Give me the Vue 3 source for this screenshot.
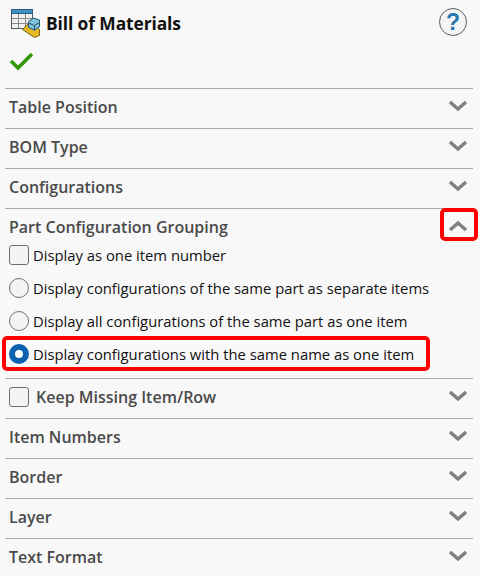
<template>
  <div class="panel">
    <header class="head">
      <div class="title-row">
        <svg class="bom-icon" width="30" height="30" viewBox="0 0 30 30">
          <rect x="0.5" y="0.500" width="21" height="19" fill="#eef0f0" stroke="#555" />
          <rect x="0.5" y="0.500" width="21" height="4" fill="#3f8fc0" stroke="#2a5f7f" />
          <path d="M7.500 5v14M14.500 5v14M1 9.500h20M1 14.500h20" stroke="#8a8a8a" fill="none" />
          <path d="M11.500 20.500l6-6 11 6v6l-5 2z" fill="#e5b820" stroke="#77631a" />
          <path d="M17.500 12.500l5-3.500 6 2v7l-5 3-6-2.500z" fill="#7fc4dc" stroke="#27566e" />
          <path d="M17.500 14l6 2.500v5M23.500 16.500l5-3" fill="none" stroke="#27566e" />
        </svg>
        <h1 class="title">Bill of Materials</h1>
        <svg class="help" width="30" height="30" viewBox="0 0 30 30">
          <circle cx="15" cy="15" r="13.500" fill="#f4f5f6" stroke="#5e5e5e" />
          <text x="15" y="23" text-anchor="middle" class="help-mark">?</text>
        </svg>
      </div>
      <svg class="check" width="26" height="20" viewBox="0 0 26 20">
        <path d="M2 10l7 7L23 3" fill="none" stroke="#2f9a06" stroke-width="3.500" />
      </svg>
    </header>

    <section v-for="s in before" :key="s" class="section">
      <div class="sec-head">
        <span class="sec-title">{{ s }}</span>
        <svg class="chev" width="20" height="12" viewBox="0 0 20 12"><path d="M2 2l8 7 8-7" fill="none" stroke="#808080" stroke-width="3.500" /></svg>
      </div>
    </section>

    <section class="section open">
      <div class="sec-head">
        <span class="sec-title">Part Configuration Grouping</span>
        <span class="chev-box">
          <svg class="chev" width="20" height="12" viewBox="0 0 20 12"><path d="M2 10l8-7 8 7" fill="none" stroke="#808080" stroke-width="3.500" /></svg>
        </span>
      </div>
      <ul class="options">
        <li v-for="o in options" :key="o.label" class="option" :class="{ picked: o.picked }">
          <span :class="o.kind"></span>
          <span>{{ o.label }}</span>
        </li>
      </ul>
    </section>

    <section class="section">
      <div class="sec-head">
        <span class="keep">
          <span class="box"></span>
          <span class="sec-title">Keep Missing Item/Row</span>
        </span>
        <svg class="chev" width="20" height="12" viewBox="0 0 20 12"><path d="M2 2l8 7 8-7" fill="none" stroke="#808080" stroke-width="3.500" /></svg>
      </div>
    </section>

    <section v-for="s in after" :key="s" class="section">
      <div class="sec-head">
        <span class="sec-title">{{ s }}</span>
        <svg class="chev" width="20" height="12" viewBox="0 0 20 12"><path d="M2 2l8 7 8-7" fill="none" stroke="#808080" stroke-width="3.500" /></svg>
      </div>
    </section>
  </div>
</template>

<script setup>
const before = ['Table Position', 'BOM Type', 'Configurations']
const after = ['Item Numbers', 'Border', 'Layer', 'Text Format']

const options = [
  { kind: 'box', label: 'Display as one item number' },
  { kind: 'radio', label: 'Display configurations of the same part as separate items' },
  { kind: 'radio', label: 'Display all configurations of the same part as one item' },
  { kind: 'radio-on', label: 'Display configurations with the same name as one item', picked: true }
]
</script>

<style>
html,
body {
  margin: 0;
  background: #f8f8f8;
}
</style>

<style scoped>
.panel {
  width: 480px;
  height: 576px;
  overflow: hidden;
  background: #f8f8f8;
  font-family: "Open Sans", "Noto Sans", sans-serif;
  color: #111;
}

.head {
  height: 88px;
  padding: 8px 7px 0 11px;
  box-sizing: border-box;
}

.title-row {
  display: flex;
  align-items: center;
  height: 30px;
}

.bom-icon {
  margin-top: 1px;
  flex: none;
}

.title {
  margin: 0 0 0 5px;
  font-size: 17.400px;
  font-weight: 700;
  letter-spacing: -0.1px;
  flex: 1;
}

.help {
  margin: -2px 5px 0 0;
}

.help-mark {
  font-family: "Liberation Sans", sans-serif;
  font-size: 23px;
  font-weight: 700;
  fill: #2a78ab;
}

.check {
  display: block;
  margin: 13px 0 0 -2px;
}

.section {
  margin: 0 7px 0 5px;
  border-top: 1px solid #a8a8a8;
}

.sec-head {
  display: flex;
  align-items: center;
  justify-content: space-between;
  height: 39px;
  box-sizing: border-box;
  padding: 0 5px 4px 4px;
}

.sec-title {
  font-size: 16px;
  font-weight: 600;
  color: #4a4a4a;
}

.chev {
  display: block;
  margin-top: -1px;
}

.chev-box {
  position: relative;
  display: flex;
}

.chev-box::after {
  content: "";
  position: absolute;
  left: -8px;
  top: -13px;
  width: 30px;
  height: 25px;
  border: 4px solid #f00;
  border-radius: 5px;
}

.options {
  list-style: none;
  margin: -10px 0 0;
  padding: 0 0 8px 4px;
}

.option {
  display: flex;
  align-items: center;
  gap: 4px;
  height: 33px;
  font-size: 14.800px;
  color: #111;
}

.picked {
  position: relative;
}

.picked::after {
  content: "";
  position: absolute;
  left: -7px;
  top: -1px;
  width: 420px;
  height: 27px;
  border: 4px solid #f00;
  border-radius: 5px;
}

.box {
  width: 18px;
  height: 18px;
  border: 1px solid #707070;
  border-radius: 3px;
  background: #f4f4f4;
  flex: none;
}

.radio,
.radio-on {
  width: 20px;
  height: 20px;
  box-sizing: border-box;
  border-radius: 50%;
  flex: none;
}

.radio {
  border: 1px solid #707070;
  background: #f4f4f4;
}

.radio-on {
  border: 6px solid #0a62b0;
  background: #fff;
}

.keep {
  display: flex;
  align-items: center;
  gap: 7px;
}
</style>
